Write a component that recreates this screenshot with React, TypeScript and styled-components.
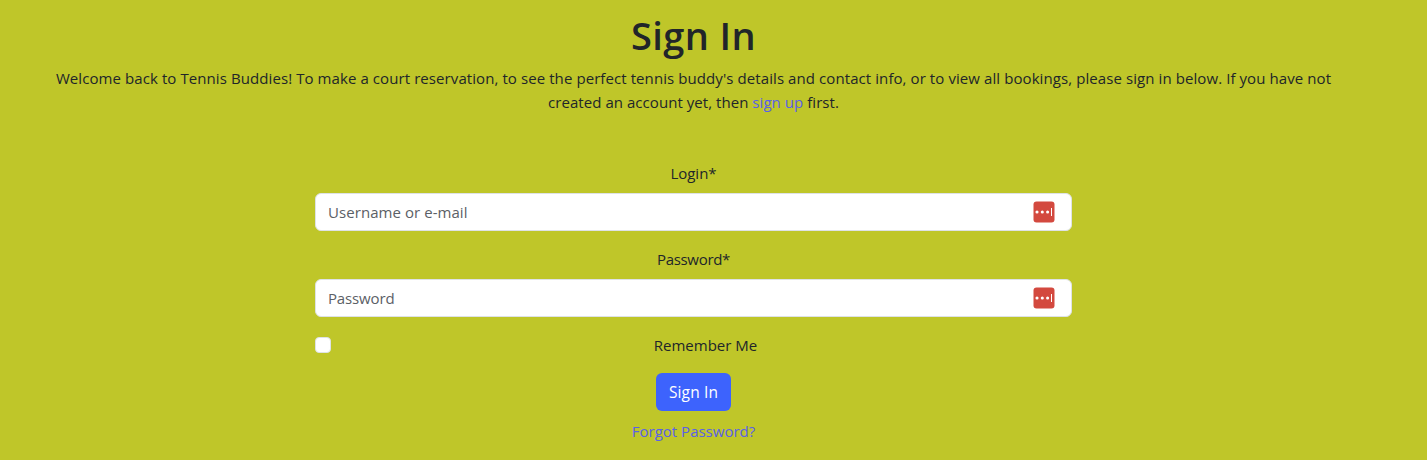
import React from 'react';
import styled, { createGlobalStyle } from 'styled-components';

const GlobalStyle = createGlobalStyle`
  *, *::before, *::after { box-sizing: border-box; }
  body {
    margin: 0;
    background: #bfc629;
    color: #212529;
    font-family: 'Segoe UI', 'Open Sans', 'Noto Sans', sans-serif;
    font-size: 15px;
    line-height: 24px;
  }
`;

const Page = styled.main`
  width: 1387px;
  height: 460px;
  padding-top: 11px;
  overflow: hidden;
  display: flex;
  flex-direction: column;
  align-items: center;
  text-align: center;
`;

const Title = styled.h1`
  margin: 0 0 7px;
  font-size: 38px;
  line-height: 48px;
  font-weight: 600;
  letter-spacing: 0.4px;
`;

const Intro = styled.p`
  margin: 0 0 47px;
  white-space: nowrap;
`;

const Link = styled.a`
  color: #5961e8;
  text-decoration: none;
`;

const Text = styled.span<{ $spacing: number }>`
  letter-spacing: ${({ $spacing }) => $spacing}px;
`;

const Form = styled.form`
  width: 757px;
  display: flex;
  flex-direction: column;
  align-items: center;
`;

const Field = styled.div`
  width: 100%;
  margin-bottom: 16px;
`;

const Label = styled.label`
  display: block;
  margin-bottom: 8px;
`;

const InputBox = styled.div`
  display: flex;
  align-items: center;
  height: 38px;
  padding: 0 16px 0 12px;
  background: #fff;
  border: 1px solid #dee2e6;
  border-radius: 6px;
`;

const Input = styled.input<{ $spacing: number }>`
  flex: 1;
  min-width: 0;
  height: 24px;
  padding: 0;
  border: 0;
  outline: 0;
  background: transparent;
  font: inherit;
  letter-spacing: ${({ $spacing }) => $spacing}px;
  color: #212529;
  &::placeholder { color: #5b6066; opacity: 1; }
`;

const CheckRow = styled.div`
  width: 100%;
  display: flex;
  align-items: center;
  gap: 8px;
  margin-bottom: 16px;
`;

const Checkbox = styled.input`
  appearance: none;
  width: 16px;
  height: 16px;
  margin: 0;
  background: #fff;
  border: 1px solid #dee2e6;
  border-radius: 4px;
`;

const CheckLabel = styled.label`
  flex: 1;
`;

const Button = styled.button`
  width: 75px;
  height: 38px;
  margin-bottom: 8px;
  padding: 0;
  border: 0;
  border-radius: 6px;
  background: #3d63fd;
  color: #fff;
  font: inherit;
  font-size: 15.5px;
  letter-spacing: 0.15px;
  white-space: nowrap;
`;

const PasswordManagerIcon = () => (
  <svg width="22" height="22" viewBox="0 0 22 22" aria-hidden="true">
    <rect x="0.5" y="0.5" width="21" height="21" rx="3" fill="#d3493f" />
    <circle cx="4" cy="11" r="1.55" fill="#fff" />
    <circle cx="9.3" cy="11" r="1.55" fill="#fff" />
    <circle cx="14.6" cy="11" r="1.55" fill="#fff" />
    <rect x="18" y="7" width="1" height="8" fill="#fff" />
  </svg>
);

export default function App() {
  return (
    <>
      <GlobalStyle />
      <Page>
        <Title>Sign In</Title>
        <Intro>
          <Text $spacing={0.084}>
            Welcome back to Tennis Buddies! To make a court reservation, to see the perfect tennis buddy's details and
            contact info, or to view all bookings, please sign in below. If you have not
          </Text>
          <br />
          <Text $spacing={0.05}>
            created an account yet, then <Link href="#">sign up</Link> first.
          </Text>
        </Intro>
        <Form>
          <Field>
            <Label htmlFor="login">Login*</Label>
            <InputBox>
              <Input id="login" placeholder="Username or e-mail" $spacing={0.06} />
              <PasswordManagerIcon />
            </InputBox>
          </Field>
          <Field>
            <Label htmlFor="password"><Text $spacing={-0.3}>Password*</Text></Label>
            <InputBox>
              <Input id="password" type="password" placeholder="Password" $spacing={-0.15} />
              <PasswordManagerIcon />
            </InputBox>
          </Field>
          <CheckRow>
            <Checkbox id="remember" type="checkbox" />
            <CheckLabel htmlFor="remember">Remember Me</CheckLabel>
          </CheckRow>
          <Button type="button">Sign In</Button>
          <Link href="#">Forgot Password?</Link>
        </Form>
      </Page>
    </>
  );
}
